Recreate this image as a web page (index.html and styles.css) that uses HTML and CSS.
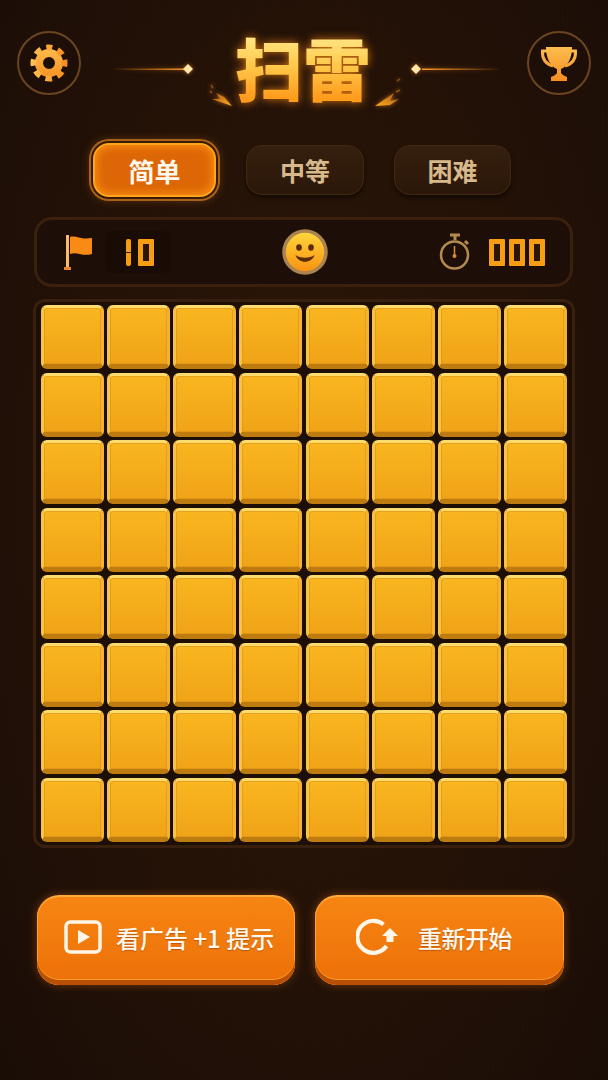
FILE: index.html
```html
<!DOCTYPE html>
<html lang="zh-CN">
    <head>
        <meta charset="UTF-8" />
        <meta name="viewport" content="width=device-width, initial-scale=1.0" />
        <title>扫雷</title>
        <link rel="stylesheet" href="styles.css">
    </head>
    <body>
        <header class="top-bar">
            <button class="round-btn" aria-label="设置">
                <svg width="40" height="40" viewBox="0 0 40 40">
                    <defs>
                        <linearGradient id="iconGold" gradientUnits="userSpaceOnUse" x1="20" y1="0" x2="20" y2="40">
                            <stop offset="0" stop-color="#ffc354" />
                            <stop offset="1" stop-color="#f58a1e" />
                        </linearGradient>
                    </defs>
                    <circle cx="20" cy="20" r="10" fill="none" stroke="url(#iconGold)" stroke-width="8" />
                    <circle cx="20" cy="20" r="15.5" fill="none" stroke="url(#iconGold)" stroke-width="6" stroke-dasharray="6.6 5.57" stroke-dashoffset="3.3" transform="rotate(-90 20 20)" />
                </svg>
            </button>
            <svg class="deco" width="156" height="80" viewBox="0 0 156 80">
                <defs>
                    <linearGradient id="lineLeft" x1="0" x2="1" y1="0" y2="0">
                        <stop offset="0" stop-color="#f08a1c" stop-opacity="0" />
                        <stop offset="1" stop-color="#ff9a26" />
                    </linearGradient>
                    <linearGradient id="sparkLeft" x1="0" x2="1" y1="0" y2="1">
                        <stop offset="0" stop-color="#a8551a" />
                        <stop offset="1" stop-color="#ffb01e" />
                    </linearGradient>
                    <linearGradient id="sparkRight" x1="1" x2="0" y1="0" y2="1">
                        <stop offset="0" stop-color="#a8551a" />
                        <stop offset="1" stop-color="#ffb01e" />
                    </linearGradient>
                </defs>
                <rect x="30" y="37.500" width="76" height="1.500" fill="url(#lineLeft)" />
                <path d="M107 33 L112 38 L107 43 L102 38 Z" fill="#ffe7a8" />
                <path d="M151 75 L131 68 L139 68 L135 62 L143 66 Z" fill="url(#sparkLeft)" />
                <path d="M130 54 l2 3 M129 60 l2 2" stroke="#8a5218" stroke-width="1.500" />
            </svg>
            <h1 class="game-title">扫雷</h1>
            <svg class="deco" width="155" height="80" viewBox="0 0 155 80">
                <defs>
                    <linearGradient id="lineRight" x1="0" x2="1" y1="0" y2="0">
                        <stop offset="0" stop-color="#ff9a26" />
                        <stop offset="1" stop-color="#f08a1c" stop-opacity="0" />
                    </linearGradient>
                </defs>
                <rect x="50" y="37.500" width="80" height="1.500" fill="url(#lineRight)" />
                <path d="M44 33 L49 38 L44 43 L39 38 Z" fill="#ffe7a8" />
                <path d="M3 75 L22 62 L18 70 L27 68 L18 74 Z" fill="url(#sparkRight)" />
                <path d="M25 50 l3 -2 M24 61 l4 -2" stroke="#8a5218" stroke-width="1.500" />
            </svg>
            <button class="round-btn" aria-label="排行榜">
                <svg width="40" height="40" viewBox="0 0 40 40">
                    <path d="M8 8 H3.500 C3 16 7 21 14 23 M32 8 H36.500 C37 16 33 21 26 23" fill="none" stroke="url(#iconGold)" stroke-width="3" />
                    <path d="M7 4 H33 C33 15 29 23 22 26 V30 C23 32 26 33 28 34 V38 H12 V34 C14 33 17 32 18 30 V26 C11 23 7 15 7 4 Z" fill="url(#iconGold)" />
                </svg>
            </button>
        </header>

        <nav class="tabs">
            <button class="tab tab-active">简单</button>
            <button class="tab">中等</button>
            <button class="tab">困难</button>
        </nav>

        <section class="status">
            <div class="status-left">
                <svg width="30" height="37" viewBox="0 0 30 37">
                    <rect x="2" y="1" width="3" height="34" fill="#f8bb6e" />
                    <rect x="0" y="33" width="7" height="3" fill="#e8862a" />
                    <path d="M6 3 C12 1 16 6 28 4 V20 C18 23 13 17 6 20 Z" fill="#f98a16" />
                </svg>
                <div class="counter">
                    <span class="seg seg-one">1</span>
                    <span class="seg">0</span>
                </div>
            </div>
            <svg class="smiley" width="46" height="46" viewBox="0 0 46 46">
                <defs>
                    <linearGradient id="faceFill" x1="0" x2="0" y1="0" y2="1">
                        <stop offset="0" stop-color="#ffd93c" />
                        <stop offset="1" stop-color="#f98f10" />
                    </linearGradient>
                </defs>
                <circle cx="23" cy="23" r="21" fill="url(#faceFill)" stroke="#a98350" stroke-width="3.500" />
                <ellipse cx="17" cy="18.500" rx="2.800" ry="3.200" fill="#5a2c08" />
                <ellipse cx="29" cy="18.500" rx="2.800" ry="3.200" fill="#5a2c08" />
                <path d="M13.500 26 C18 29.500 28 29.500 32.500 26 C30 35 16 35 13.500 26 Z" fill="#5a2c08" />
            </svg>
            <div class="status-right">
                <svg width="32" height="38" viewBox="0 0 32 38">
                    <path d="M11 2 H21 M16 2 V7 M26 8 L29 11" fill="none" stroke="#b58a50" stroke-width="3" />
                    <circle cx="15.500" cy="22" r="13.500" fill="none" stroke="#b58a50" stroke-width="2.500" />
                    <path d="M15.500 13 V22" stroke="#d68a3a" stroke-width="1.500" />
                    <circle cx="15.500" cy="23" r="2" fill="#d68a3a" />
                </svg>
                <div class="timer">
                    <span class="seg">0</span>
                    <span class="seg">0</span>
                    <span class="seg">0</span>
                </div>
            </div>
        </section>

        <main class="board">
            <div class="cell"></div><div class="cell"></div><div class="cell"></div><div class="cell"></div><div class="cell"></div><div class="cell"></div><div class="cell"></div><div class="cell"></div>
            <div class="cell"></div><div class="cell"></div><div class="cell"></div><div class="cell"></div><div class="cell"></div><div class="cell"></div><div class="cell"></div><div class="cell"></div>
            <div class="cell"></div><div class="cell"></div><div class="cell"></div><div class="cell"></div><div class="cell"></div><div class="cell"></div><div class="cell"></div><div class="cell"></div>
            <div class="cell"></div><div class="cell"></div><div class="cell"></div><div class="cell"></div><div class="cell"></div><div class="cell"></div><div class="cell"></div><div class="cell"></div>
            <div class="cell"></div><div class="cell"></div><div class="cell"></div><div class="cell"></div><div class="cell"></div><div class="cell"></div><div class="cell"></div><div class="cell"></div>
            <div class="cell"></div><div class="cell"></div><div class="cell"></div><div class="cell"></div><div class="cell"></div><div class="cell"></div><div class="cell"></div><div class="cell"></div>
            <div class="cell"></div><div class="cell"></div><div class="cell"></div><div class="cell"></div><div class="cell"></div><div class="cell"></div><div class="cell"></div><div class="cell"></div>
            <div class="cell"></div><div class="cell"></div><div class="cell"></div><div class="cell"></div><div class="cell"></div><div class="cell"></div><div class="cell"></div><div class="cell"></div>
        </main>

        <footer class="actions">
            <button class="action action-hint">
                <svg width="38" height="34" viewBox="0 0 38 34">
                    <rect x="2" y="2" width="34" height="30" rx="4.500" fill="none" stroke="#fff6ea" stroke-width="3.500" />
                    <path d="M14 10 L26 17 L14 24 Z" fill="#fff6ea" />
                </svg>
                <span>看广告 +1 提示</span>
            </button>
            <button class="action action-restart">
                <svg width="42" height="38" viewBox="0 0 42 38">
                    <path d="M27.500 6.500 A16 16 0 1 0 30.500 28" fill="none" stroke="#fff6ea" stroke-width="4.200" />
                    <path d="M34 10 L42 18 H37.500 V24 H30.500 V18 H26 Z" fill="#fff6ea" />
                </svg>
                <span>重新开始</span>
            </button>
        </footer>
    </body>
</html>
```

FILE: styles.css
```css
* {
    box-sizing: border-box;
}

body {
    width: 608px;
    height: 1080px;
    margin: 0;
    padding-top: 31px;
    overflow: hidden;
    font-family: "Noto Sans CJK SC", "Liberation Sans", sans-serif;
    background-color: #21110a;
    background-image:
        repeating-linear-gradient(90deg, rgba(0, 0, 0, 0.05) 0 1px, transparent 1px 5px),
        radial-gradient(ellipse at 50% 45%, #2c1708 0%, #241207 55%, #1a0d07 100%);
}

button {
    font-family: inherit;
    padding: 0;
    cursor: pointer;
}

.top-bar {
    display: flex;
    align-items: flex-start;
    height: 64px;
    padding-left: 17px;
}

.round-btn {
    display: flex;
    align-items: center;
    justify-content: center;
    flex: none;
    width: 64px;
    height: 64px;
    border: 2px solid #6b4522;
    border-radius: 50%;
    background-color: #1d0f07;
}

.deco {
    flex: none;
    filter: drop-shadow(0 0 2px rgba(255, 140, 30, 0.7));
}

.game-title {
    flex: none;
    width: 137px;
    height: 80px;
    margin: -4px 0 0 -2px;
    font-size: 68px;
    font-weight: 900;
    line-height: 80px;
    white-space: nowrap;
    color: transparent;
    background: linear-gradient(180deg, #ffe684 12%, #ffc748 50%, #ff9c1e 88%);
    -webkit-background-clip: text;
    background-clip: text;
    filter: drop-shadow(0 0 5px rgba(255, 140, 20, 0.8));
}

.tabs {
    display: flex;
    align-items: center;
    gap: 30px;
    height: 54px;
    margin-top: 48px;
    padding-left: 93px;
}

.tab {
    width: 118px;
    height: 50px;
    border: 1px solid #43270f;
    border-radius: 16px;
    font-size: 25px;
    font-weight: 700;
    color: #d8b98c;
    background: linear-gradient(180deg, #351f0e, #2b1709);
    box-shadow: 0 3px 4px rgba(0, 0, 0, 0.5);
}

.tab:last-child {
    width: 117px;
}

.tab-active {
    width: 123px;
    height: 54px;
    border: 2px solid #ffa61c;
    font-size: 26px;
    color: #fff8ee;
    background: #dd6606;
    box-shadow: inset 0 0 9px 2px #f98e12, 0 0 0 2px #3a1c06, 0 0 0 4px #a8611a, 0 0 8px 4px rgba(240, 130, 20, 0.25);
}

.status {
    display: flex;
    align-items: center;
    justify-content: space-between;
    width: 539px;
    height: 70px;
    margin: 20px 0 0 34px;
    padding: 0 25px 0 27px;
    border: 3px solid #3b200d;
    border-radius: 18px;
    background-color: #1d0f07;
}

.status-left,
.status-right {
    display: flex;
    align-items: center;
}

.status-left {
    width: 180px;
}

.status-right {
    justify-content: flex-end;
    width: 180px;
    gap: 18px;
}

.counter {
    display: flex;
    align-items: center;
    justify-content: flex-end;
    gap: 7px;
    width: 66px;
    height: 42px;
    margin-left: 11px;
    padding-right: 17px;
    border-radius: 8px;
    background-color: #190c05;
}

.timer {
    display: flex;
    gap: 4px;
}

/* digit display, the character stays in the markup */
.seg {
    position: relative;
    display: block;
    width: 16px;
    height: 27px;
    overflow: hidden;
    border: 5px solid #f79d14;
    border-radius: 1px;
    font-size: 10px;
    line-height: 17px;
    color: transparent;
    background-color: #2a1506;
}

.seg::before,
.seg::after {
    content: "";
    position: absolute;
    top: 8px;
    width: 5px;
    height: 1px;
    background-color: #3a1f0a;
}

.seg::before {
    left: -5px;
}

.seg::after {
    right: -5px;
}

.seg-one {
    width: 5px;
    border-width: 0;
    border-radius: 2px;
    background-color: #f79d14;
    font-size: 4px;
}

.seg-one::before {
    left: 0;
    top: 13px;
    width: 5px;
}

.seg-one::after {
    display: none;
}

.board {
    display: grid;
    grid-template-columns: repeat(8, 1fr);
    grid-auto-rows: 64px;
    gap: 3.5px 3.14px;
    width: 542px;
    height: 549px;
    margin: 12px 0 0 33px;
    padding: 3px 5px;
    border: 3px solid #39200e;
    border-radius: 12px;
    background-color: #1e0f06;
}

.cell {
    border-style: solid;
    border-width: 3px 3px 5px;
    border-color: #fddb6c #f4b233 #bd7b10 #f8c448;
    border-radius: 6px;
    background: linear-gradient(180deg, #f9b620, #f0a317);
    box-shadow: inset 0 0 0 1px rgba(214, 140, 24, 0.5);
}

.actions {
    display: flex;
    margin: 47px 0 0 37px;
    gap: 20px;
}

.action {
    display: flex;
    align-items: center;
    height: 90px;
    padding-bottom: 8px;
    border: 0;
    border-top: 2px solid #ffaa3a;
    border-radius: 22px;
    font-size: 24px;
    font-weight: 500;
    color: #fff8ee;
    text-shadow: 0 1px 1px rgba(120, 50, 0, 0.45);
    background: linear-gradient(180deg, #f78512, #ec7008);
    box-shadow: inset 0 -5px 0 #b84f03, inset 0 -6px 0 #fa9a2c, inset 1px 0 0 #ffa236, inset -1px 0 0 #ffa236, 0 0 10px rgba(240, 120, 20, 0.4);
}

.action-hint {
    gap: 14px;
    width: 258px;
    padding-left: 27px;
}

.action-restart {
    gap: 20px;
    width: 249px;
    padding-left: 41px;
    letter-spacing: -0.5px;
}
```
